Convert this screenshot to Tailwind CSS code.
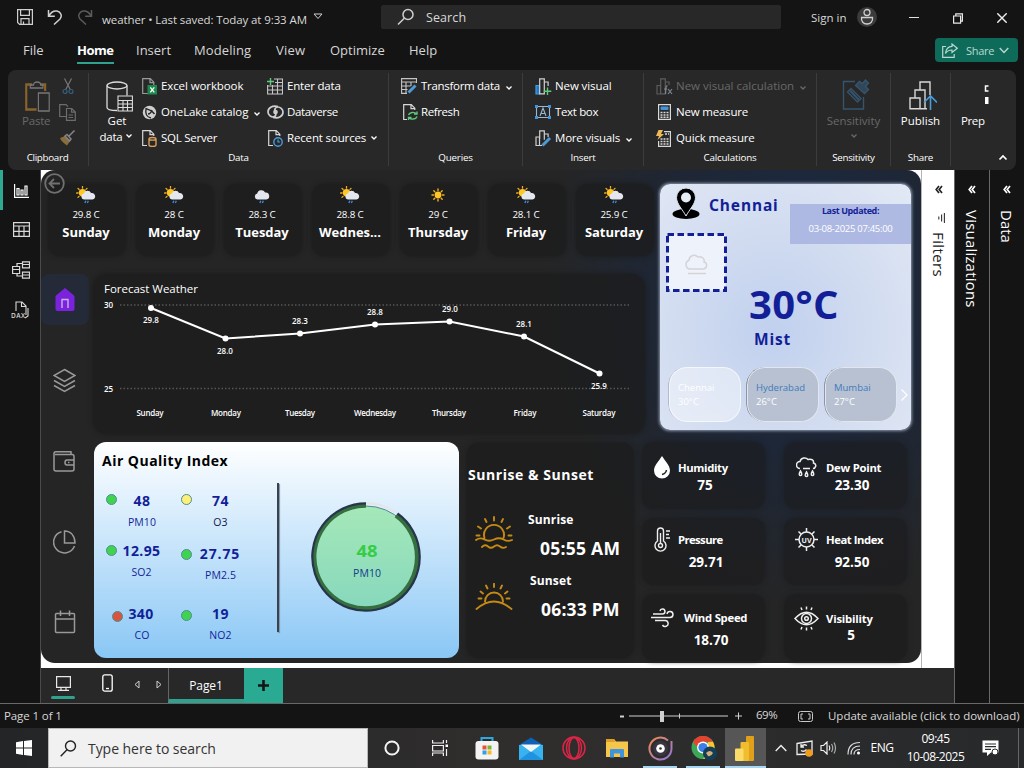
<!DOCTYPE html>
<html lang="en">
<head>
<meta charset="utf-8">
<title>weather - Power BI Desktop</title>
<script src="https://cdn.jsdelivr.net/npm/@tailwindcss/browser@4"></script>
</head>
<body class="w-[1024px] h-[768px] overflow-hidden bg-[#141414] text-white font-['Open_Sans','Noto_Sans',sans-serif] text-[12px] leading-none whitespace-nowrap flex flex-col">

<svg class="hidden">
  <symbol id="sun-cloud" viewBox="0 0 20 18">
    <g stroke="#f2b01e" stroke-width="1.3" stroke-linecap="round"><path d="M6.500 .6v1.600M2 2.400l1.100 1.100M.6 7h1.500M2 11.400l1-1M11 2.400l-1 1"/></g>
    <circle cx="6.500" cy="6.800" r="3.700" fill="#ffc526"/>
    <path d="M8 13.500a3 3 0 0 1-.3-5.900 4 4 0 0 1 7.400-.6 3.300 3.300 0 0 1 1.400 6.500z" fill="#e4e8ee"/>
    <path d="M9.800 14.700l-.9 2.200M12.300 14.700l-.9 2.200" stroke="#3f8ce0" stroke-width="1.300"/>
  </symbol>
  <symbol id="cloud-rain" viewBox="0 0 20 18">
    <path d="M5.500 13.500a3 3 0 0 1-.3-5.900 4.200 4.200 0 0 1 7.900-1 3.500 3.500 0 0 1 1.200 6.900z" fill="#e4e8ee"/>
    <path d="M8.800 14.700l-.9 2.200M11.300 14.700l-.9 2.200" stroke="#3f8ce0" stroke-width="1.300"/>
  </symbol>
  <symbol id="sunny" viewBox="0 0 20 18">
    <circle cx="10" cy="9" r="3.400" fill="#ffc526"/>
    <path d="M10 3v1.500M10 13.500V15M4 9h1.500M14.500 9H16M5.800 4.800l1 1M13.200 12.200l1 1M5.800 13.200l1-1M13.200 5.800l1-1" stroke="#f2b01e" stroke-width="1.400" stroke-linecap="round"/>
  </symbol>
  <symbol id="chev" viewBox="0 0 8 6"><path d="M1.500 1.500L4 4l2.500-2.500" fill="none" stroke="currentColor" stroke-width="1.300"/></symbol>
  <symbol id="collapse" viewBox="0 0 8 9"><path d="M4 1L1.200 4.500 4 8M7 1L4.200 4.500 7 8" fill="none" stroke="currentColor" stroke-width="1.700"/></symbol>
</svg>

<!-- Title bar -->
<header class="h-[34px] shrink-0 flex items-center text-[#d8d8d8]">
  <svg class="ml-[17px] w-4 h-4" viewBox="0 0 16 16" fill="none" stroke="#d0d0d0" stroke-width="1.200"><path d="M.6.6h14.800v14.800H2.600l-2-2zM3.600.6v5.800h8.800V.6M4 15.400V9.600h8v5.800M6.500 15v-2.500"/></svg>
  <svg class="ml-[14px] w-4 h-4" viewBox="0 0 16 16" fill="none" stroke="#d0d0d0" stroke-width="1.500"><path d="M1.500 1v6.300h6.300M1.800 7C4 3 7 1.500 10 2c4 .8 5.500 5 3 8l-6 5.500"/></svg>
  <svg class="ml-[14px] w-4 h-4" viewBox="0 0 16 16" fill="none" stroke="#5a5a5a" stroke-width="1.500"><path d="M14.500 1v6.300H8.200M14.200 7C12 3 9 1.500 6 2c-4 .8-5.500 5-3 8l6 5.500"/></svg>
  <span class="ml-[9px] mt-[5px] w-[206px] text-[11.500px] tracking-[-0.1px]">weather • Last saved: Today at 9:33 AM</span>
  <svg class="ml-[5px] w-[10px] h-[8px]" viewBox="0 0 10 8" fill="none" stroke="#cfcfcf"><path d="M1 1h8L5 5.500z"/></svg>
  <div class="ml-[58px] w-[400px] h-6 bg-[#282828] rounded-xs flex items-center">
    <svg class="ml-4 w-[18px] h-[18px]" viewBox="0 0 18 18" fill="none" stroke="#d0d0d0" stroke-width="1.500"><circle cx="11" cy="6.500" r="5"/><path d="M7.300 10.200L1 16.500"/></svg>
    <span class="ml-[11px] mt-[2px] text-[12.500px] tracking-[0.1px]">Search</span>
  </div>
  <span class="ml-[30px] w-[36px] mt-[2px] text-[11.500px]">Sign in</span>
  <svg class="ml-[10px] w-5 h-5" viewBox="0 0 20 20" fill="none" stroke="#d0d0d0" stroke-width="1.300"><circle cx="10" cy="10" r="10" fill="#3b3b3b" stroke="none"/><circle cx="10" cy="5.500" r="3"/><path d="M4.500 10.500h11c.6 4-2 6.500-5.500 6.500s-6-2.500-5.500-6.500z"/></svg>
  <svg class="ml-[32px] w-[10px] h-[10px]" viewBox="0 0 10 10" stroke="#e0e0e0"><path d="M0 5.500h10"/></svg>
  <svg class="ml-[34px] mt-[2px] w-[10px] h-[11px]" viewBox="0 0 10 11" fill="none" stroke="#e8e8e8" stroke-width="1.200"><path d="M.6 3h7v7.200h-7zM2.800 2.800V.8h6.600v7.400H7.800"/></svg>
  <svg class="ml-[34px] mt-[2px] w-[10px] h-[10px]" viewBox="0 0 10 10" stroke="#f0f0f0" stroke-width="1.400"><path d="M.3.3l9.400 9.400M9.700.3L.3 9.700"/></svg>
</header>

<!-- Menu tabs -->
<nav class="h-9 shrink-0 flex items-start text-[13px] text-[#d6d6d6]">
  <span class="ml-[23px] mt-[10px] w-[54px]">File</span>
  <span class="w-[37px] h-[30px] pt-[10px] border-b-2 border-[#2fa28f] font-bold text-white tracking-[-0.5px]">Home</span>
  <span class="ml-[22px] mt-[10px] w-[58px]">Insert</span>
  <span class="mt-[10px] w-[82px] tracking-[0.1px]">Modeling</span>
  <span class="mt-[10px] w-[54px] tracking-[0.2px]">View</span>
  <span class="mt-[10px] w-[79px]">Optimize</span>
  <span class="mt-[10px] w-[30px]">Help</span>
  <button class="ml-auto mr-[6px] mt-[4px] w-[83px] h-6 rounded bg-[#0e6b5a] flex items-center text-[11px] text-[#b9d8d1]">
    <svg class="ml-[7px] w-4 h-[15px]" viewBox="0 0 16 15" fill="none" stroke="#b9d8d1" stroke-width="1.200"><path d="M4 3.500H.7v10.800h11.500V11M10 1l5.300 4.200L10 9.500V7C7 7 5 8 3.500 10.500 4 6 6 3.600 10 3.400z"/></svg>
    <span class="ml-[8px] w-[28px] tracking-[-0.3px]">Share</span>
    <svg class="ml-[5px] w-[10px] h-[7px]" viewBox="0 0 10 7" fill="none" stroke="#b9d8d1" stroke-width="1.400"><path d="M.7 1L5 5.500 9.300 1"/></svg>
  </button>
</nav>

<!-- Ribbon -->
<section class="h-[100px] shrink-0 mx-2 rounded-lg bg-[#282828] flex pt-[3px] pb-1 text-[11.500px] [&>div]:shrink-0 [&>div]:flex [&>div]:flex-col [&>div]:justify-between [&>div]:border-r [&>div]:border-[#3c3c3c]">
  <div class="w-[81px]">
    <div class="flex">
      <div class="ml-[14px] w-[32px] pt-[8px] flex flex-col text-[#686868]">
        <svg class="ml-[2px] w-[27px] h-[31px]" viewBox="0 0 30 31" preserveAspectRatio="none" fill="none" stroke-width="1.300"><path d="M9 3.500H2.500v25H14M19 3.500h4.500V10" stroke="#8a632b" stroke-width="2.400"/><path d="M7 7V4h3.500c0-4 8-4 8 0H21v3z" stroke="#777"/><path d="M16 12h12v18H16z" stroke="#777"/></svg>
        <span class="mt-[3px] tracking-[-0.2px]">Paste</span>
      </div>
      <div class="ml-[5px] pt-[5px] flex flex-col items-center gap-[9px]">
        <svg class="w-[12px] h-[17px]" viewBox="0 0 12 17" fill="none" stroke-width="1.200"><path d="M2.500.5L8.500 12M9.500.5L3.500 12" stroke="#777"/><circle cx="3" cy="13.500" r="2" stroke="#31607f"/><circle cx="9" cy="13.500" r="2" stroke="#31607f"/></svg>
        <svg class="w-[17px] h-[17px]" viewBox="0 0 17 17" fill="none" stroke="#6c6c6c" stroke-width="1.200"><path d="M7 12.500H.7V.7H7l2 2M7.500 4.500h5.300l3.500 3.500v8.300H7.500zM12.500 4.500v3.700h3.800M9.500 11h4.500M9.500 13.500h4.500"/></svg>
        <svg class="w-[17px] h-[16px]" viewBox="0 0 17 16"><path d="M1 8l5-2 5 5-3 4.500C5.500 14 2 11 1 8z" fill="#8a6d3c"/><path d="M6 6l2-1.500 4 4.500-1.500 2zM10 6l5.500-5.500" fill="none" stroke="#858585" stroke-width="1.500"/></svg>
      </div>
    </div>
    <p class="w-[79px] pb-[3px] text-center text-[9.800px] font-medium tracking-[-0.3px]">Clipboard</p>
  </div>

  <div class="w-[300px]">
    <div class="flex h-[78px]">
      <div class="ml-[8px] w-[40px] pt-[8px] flex flex-col items-center">
        <svg class="ml-[4px] w-[27px] h-[31px]" viewBox="0 0 27 31" fill="none" stroke="#dcdcdc" stroke-width="1.300"><ellipse cx="11" cy="4.500" rx="10" ry="3.500"/><path d="M1 4.500v22c0 2 5 3 10 3M21 4.500v10"/><path d="M12 15h14.400v15H12zM12 19.500h14.400M12 23h14.400M12 26.500h14.400M17 19v11M21.500 19v11" stroke-width="1.100"/></svg>
        <span class="mt-[3px]">Get</span>
        <span class="-ml-[2px] mt-[4px] flex items-center tracking-[-0.2px]">data<svg class="ml-[2px] w-2 h-[6px]"><use href="#chev"/></svg></span>
      </div>
      <div class="ml-[5px] w-[126px]">
        <div class="h-[26px] flex items-center"><svg class="w-[15px] h-[17px]" viewBox="0 0 15 17"><path d="M6 15.500H.7V.7h7.600l3.500 3.500V7M8 .7v4h4" fill="none" stroke="#9a9a9a" stroke-width="1.200"/><path d="M5.500 7H15v9.500H5.500z" fill="#1b8a4e"/><path d="M8.300 9.300l4 5M12.300 9.300l-4 5" stroke="#fff" stroke-width="1.300"/></svg><span class="ml-[4px] tracking-[-0.1px]">Excel workbook</span></div>
        <div class="h-[26px] flex items-center"><svg class="w-[15px] h-[15px]" viewBox="0 0 15 15"><circle cx="7.500" cy="7.500" r="6.700" fill="#cfcfcf"/><path d="M3.500 3.500c2 1 6 1 9 5.500M4 4c-1 5 1 8 5 9M6 9c1.500 0 3-1 4-4" fill="none" stroke="#282828" stroke-width="1.400"/></svg><span class="ml-[4px] tracking-[-0.1px]">OneLake catalog</span><svg class="ml-[5px] mt-[4px] w-2 h-[6px]"><use href="#chev"/></svg></div>
        <div class="h-[26px] flex items-center"><svg class="w-[15px] h-[17px]" viewBox="0 0 15 17" fill="none"><path d="M5 15.500H.7V.7h7.600l3.500 3.500V6M8 .7v4h4" stroke="#d8d8d8" stroke-width="1.200"/><path d="M7 9c0-2 7-2 7 0v6c0 2-7 2-7 0zM7 9c0 1.500 7 1.500 7 0" stroke="#d9a05b" stroke-width="1.400"/></svg><span class="ml-[4px] tracking-[-0.25px]">SQL Server</span></div>
      </div>
      <div class="-ml-[1px] w-[116px]">
        <div class="h-[26px] flex items-center"><svg class="w-[16px] h-[17px]" viewBox="0 0 16 17" fill="none" stroke="#c6c6c6" stroke-width="1.100"><path d="M7 1h8.500v15H.6V7M.6 8h15M.6 12h15M5.500 7v9M10.500 1v15M8 4.500h7.500"/><path d="M3.500 0v7M0 3.500h7" stroke="#5fc97c" stroke-width="1.400"/></svg><span class="ml-[4px] tracking-[-0.2px]">Enter data</span></div>
        <div class="h-[26px] flex items-center"><svg class="w-[17px] h-[14px]" viewBox="0 0 17 14" fill="none" stroke="#cfcfcf" stroke-width="1.700"><path d="M11 1.500C5 0 1 3 1 7c0 3 3 5 5 5 4 0 3-5 1.500-6M6 12.500c6 1.500 10-1.500 10-5.500 0-3-3-5-5-5-4 0-4 5-1.500 6"/><circle cx="8.500" cy="7" r="1.500"/></svg><span class="ml-[3px] tracking-[-0.35px]">Dataverse</span></div>
        <div class="h-[26px] flex items-center"><svg class="ml-[1px] w-[15px] h-[17px]" viewBox="0 0 15 17" fill="none"><path d="M5 15.500H.7V.7h7.600l3.500 3.500V6M8 .7v4h4" stroke="#d8d8d8" stroke-width="1.200"/><circle cx="10" cy="12" r="4.200" stroke="#4a9bd8" stroke-width="1.400"/><path d="M10 9.500V12h2" stroke="#4a9bd8" stroke-width="1.200"/></svg><span class="ml-[4px] tracking-[-0.15px]">Recent sources</span><svg class="ml-[4px] w-2 h-[6px]"><use href="#chev"/></svg></div>
      </div>
    </div>
    <p class="pb-[3px] text-center text-[9.800px] font-medium tracking-[-0.2px]">Data</p>
  </div>

  <div class="w-[134px]">
    <div class="ml-[12px]">
      <div class="h-[26px] flex items-center"><svg class="w-[16px] h-[16px]" viewBox="0 0 16 16" fill="none" stroke="#c6c6c6" stroke-width="1.100"><path d="M15.500 5V.6H.6v14.800H6M.6 4h15M.6 8h9M.6 11.500h6M5 4v11M10 4v4"/><path d="M7.500 14.500l7-7" stroke="#4a9bd8" stroke-width="3"/></svg><span class="ml-[4px] tracking-[-0.3px]">Transform data</span><svg class="ml-[5px] mt-[4px] w-2 h-[6px]"><use href="#chev"/></svg></div>
      <div class="h-[26px] flex items-center"><svg class="ml-[2px] w-[15px] h-[17px]" viewBox="0 0 15 17" fill="none"><path d="M4 15.500H.7V.7h7.600l3.500 3.500V6M8 .7v4h4" stroke="#d8d8d8" stroke-width="1.200"/><path d="M5.500 11c1-3 6-3.500 8-1M14 7.500V10h-3M14 12.500c-1 3-6 3.500-8 1M5.500 16v-2.500h3" stroke="#5fc97c" stroke-width="1.400"/></svg><span class="ml-[3px] tracking-[-0.4px]">Refresh</span></div>
    </div>
    <p class="pb-[3px] text-center text-[9.800px] font-medium tracking-[-0.2px]">Queries</p>
  </div>

  <div class="w-[121px]">
    <div class="ml-[12px]">
      <div class="h-[26px] flex items-center"><svg class="w-[17px] h-[17px]" viewBox="0 0 17 17" fill="none" stroke="#d0d0d0" stroke-width="1.200"><path d="M1 7.500h3.500V16H1z" fill="#1b79c8" stroke="#4a9bd8"/><path d="M4.700.8h4.600v15H4.700zM9.500 4h3.600v4" /><path d="M12.500 9.500V17M8.800 13.200h7.500" stroke="#5fc97c" stroke-width="1.400"/></svg><span class="ml-[3px] tracking-[-0.1px]">New visual</span></div>
      <div class="h-[26px] flex items-center"><svg class="w-[16px] h-[14px]" viewBox="0 0 16 14"><path d="M1.500 1.500h13v11h-13zM5 11l3-8 3 8M6 8.500h4" fill="none" stroke="#9ab8cf" stroke-width="1.100"/><g fill="#3f96dc"><path d="M0 0h3v3H0zM13 0h3v3h-3zM0 11h3v3H0zM13 11h3v3h-3z"/></g></svg><span class="ml-[4px] tracking-[-0.35px]">Text box</span></div>
      <div class="h-[26px] flex items-center"><svg class="w-[17px] h-[17px]" viewBox="0 0 17 17" fill="none" stroke="#d0d0d0" stroke-width="1.200"><path d="M7 15.500H1V7h3.500v8M4.700 9V.8h4.600v9M9.500 4h3.600v3"/><path d="M7.500 15.500l7.500-7.500" stroke="#4a9bd8" stroke-width="3"/></svg><span class="ml-[3px] tracking-[-0.2px]">More visuals</span><svg class="ml-[5px] mt-[4px] w-2 h-[6px]"><use href="#chev"/></svg></div>
    </div>
    <p class="pb-[3px] text-center text-[9.800px] font-medium tracking-[-0.2px]">Insert</p>
  </div>

  <div class="w-[173px]">
    <div class="ml-[12px]">
      <div class="h-[26px] flex items-center text-[#686868]"><svg class="w-[17px] h-[17px]" viewBox="0 0 17 17" fill="none" stroke="#5c5c5c" stroke-width="1.200"><path d="M1 7.500h3.500V16H1zM4.700.8h4.600v15H4.700zM9.500 4h3.600v3"/><path d="M11.500 8c-2-1-1.500 3-2 8M8 11h3" stroke="#7e8890"/><path d="M12 11l4 5M16 11l-4 5" stroke="#7e8890"/></svg><span class="ml-[3px] tracking-[0px]">New visual calculation</span><svg class="ml-[5px] mt-[4px] w-2 h-[6px]"><use href="#chev"/></svg></div>
      <div class="h-[26px] flex items-center"><svg class="ml-[2px] w-[13px] h-[16px]" viewBox="0 0 13 16" fill="none" stroke="#d8d8d8"><path d="M.6.6h11.800v14.800H.6z" stroke-width="1.200"/><path d="M3 3h7v2.500H3z" fill="#3f96dc" stroke="#3f96dc"/><path d="M2.500 8.500h8M2.500 11h8M2.500 13.300h8" stroke-width="1.500" stroke-dasharray="2 1"/></svg><span class="ml-[5px] tracking-[-0.2px]">New measure</span></div>
      <div class="h-[26px] flex items-center"><svg class="w-[15px] h-[17px]" viewBox="0 0 15 17" fill="none" stroke="#d8d8d8"><path d="M8 1.600h6.400v14.800H2.600V11" stroke-width="1.200"/><path d="M4.500 9h8M4.500 11.500h8M4.500 14h8M9 4h4" stroke-width="1.500" stroke-dasharray="2 1"/><path d="M2.500 0H7L5 4h3L1.500 10 3 6H0z" fill="#edb95a" stroke="none"/></svg><span class="ml-[5px] tracking-[-0.15px]">Quick measure</span></div>
    </div>
    <p class="pb-[3px] text-center text-[9.800px] font-medium tracking-[-0.2px]">Calculations</p>
  </div>

  <div class="w-[74px]">
    <div class="flex flex-col items-center text-[#686868] pt-[5px]">
      <svg class="ml-[4px] w-[28px] h-[32px]" viewBox="0 0 28 32" fill="none" stroke="#35546d" stroke-width="1.400"><path d="M13 3.500H1.500V31h20V19"/><path d="M5.500 14l3.500-3.500 10 10L15.500 24z"/><path d="M8 12.500l9 9.500" stroke-width="2"/><path d="M13.500 7.500l4-4 3 2 3-3.500 3 3-3 3.500 3 3-4 4z" fill="#35546d" fill-opacity=".7"/></svg>
      <span class="mt-[5px]">Sensitivity</span>
      <svg class="mt-[6px] w-2 h-[6px]"><use href="#chev"/></svg>
    </div>
    <p class="pb-[3px] text-center text-[9.800px] font-medium tracking-[-0.3px]">Sensitivity</p>
  </div>

  <div class="w-[60px]">
    <div class="flex flex-col items-center pt-[8px]">
      <svg class="ml-[5px] w-[28px] h-[29px]" viewBox="0 0 28 29" fill="none" stroke="#d8d8d8" stroke-width="1.400"><path d="M1 17h10v10.800H1zM6 17V9h10v18.800h-5M11 9V1h10v13M16 27.800h2"/><path d="M21.500 29V15.500M15 21.500l6.500-6.500 6.500 6.500" stroke="#4a9bd8" stroke-width="1.600"/></svg>
      <span class="mt-[5px]">Publish</span>
    </div>
    <p class="pb-[3px] text-center text-[9.800px] font-medium tracking-[-0.2px]">Share</p>
  </div>

  <div class="grow border-r-0!">
    <div class="flex flex-col pl-[10px] pt-[12px]">
      <svg class="ml-[23px] w-[5px] h-[20px]" viewBox="0 0 5 20"><path d="M4.500 1H1.500v5h3" fill="none" stroke="#fff" stroke-width="1.500"/><path d="M1 12h3.500v7H1z" fill="#fff"/></svg>
      <span class="mt-[10px] tracking-[-0.4px]">Prep</span>
    </div>
    <svg class="self-end mr-[8px] mb-[5px] w-[10px] h-[7px]" viewBox="0 0 10 7" fill="none" stroke="#fff" stroke-width="1.700"><path d="M1.500 5.500L5 2l3.500 3.500"/></svg>
  </div>
</section>

<!-- Workspace -->
<main class="h-[533px] shrink-0 flex">
  <aside class="w-[41px] shrink-0 border-r border-[#4a4a4a] flex">
    <div class="w-[3px] h-10 bg-[#2fa98f]"></div>
    <div class="w-[36px] flex flex-col items-center pt-[14px]">
      <svg class="w-[15px] h-[14px]" viewBox="0 0 15 14" fill="none" stroke="#fff" stroke-width="1.200"><path d="M.6 0v13.400H15M3 4.500h2v6.500H3zM7 6h2v5H7zM11 2h2v9h-2z"/></svg>
      <svg class="mt-[24px] w-[17px] h-[15px]" viewBox="0 0 17 15" fill="none" stroke="#d8d8d8" stroke-width="1.200"><path d="M.6.6h15.800v13.800H.6zM.6 4h16M.6 9.300h16M6 4v10M11 4v10"/></svg>
      <svg class="mt-[24px] w-[18px] h-[18px]" viewBox="0 0 18 18" fill="none" stroke="#d8d8d8" stroke-width="1.200"><path d="M10.500.8h7v6h-7zM10.500 11.200h7v6h-7zM.6 5.500h7v7h-7zM.6 8.500h7M10.500 3.500h7M10.500 14h7M5 5.500V2.500h5.500M5 12.500v2.500h5.500"/></svg>
      <svg class="-ml-[2px] mt-[22px] w-[18px] h-[18px]" viewBox="0 0 18 18" fill="none" stroke="#d8d8d8" stroke-width="1.100"><path d="M5 10V1h6l4 4v9M10.500 1v4.500H15M17 7v8l-3 2"/><text x="0" y="17" font-size="6.500" fill="#d8d8d8" stroke="none" font-weight="600" textLength="14">DAX</text></svg>
    </div>
  </aside>

  <section class="w-[913px] shrink-0 flex flex-col">
    <div class="h-[498px] flex">
      <!-- Report canvas -->
      <div class="w-[880px] shrink-0 bg-white">
        <div class="relative h-[493px] rounded-[14px] flex flex-col bg-[#252525] bg-[radial-gradient(ellipse_260px_320px_at_760px_120px,#1b2a47_0%,#1e2737_50%,#252525_100%)]">
          <svg class="absolute left-[3px] top-[3px] w-[21px] h-[21px]" viewBox="0 0 21 21" fill="none" stroke="#707070" stroke-width="1.800"><circle cx="10.500" cy="10.500" r="9.300"/><path d="M16 10.500H5.500M10 6l-4.500 4.500L10 15"/></svg>
          <div class="h-[264px] flex">
            <div class="w-[619px] shrink-0">
              <!-- Daily forecast -->
              <div class="pt-[14px] pl-[7px] flex gap-[10px] [&>div]:w-[78px] [&>div]:h-[72px] [&>div]:rounded-[12px] [&>div]:bg-[#1b1b1b]/70 [&>div]:flex [&>div]:flex-col [&>div]:items-center [&>div]:pr-[2px] [&>div]:shadow-[0_0_5px_#1b1b1b] [&_svg]:w-5 [&_svg]:h-[18px] [&_svg]:mt-[2px] [&_p]:mt-[6px] [&_p]:h-[10px] [&_p]:text-[9.800px] [&_p]:tracking-[-0.15px] [&_b]:mt-[6px] [&_b]:text-[13px] [&_b]:tracking-[-0.05px]">
                <div><svg><use href="#sun-cloud"/></svg><p>29.8 C</p><b>Sunday</b></div>
                <div><svg><use href="#sun-cloud"/></svg><p>28 C</p><b>Monday</b></div>
                <div><svg><use href="#cloud-rain"/></svg><p>28.3 C</p><b>Tuesday</b></div>
                <div><svg><use href="#sun-cloud"/></svg><p>28.8 C</p><b>Wednes...</b></div>
                <div><svg><use href="#sunny"/></svg><p>29 C</p><b>Thursday</b></div>
                <div><svg><use href="#sun-cloud"/></svg><p>28.1 C</p><b>Friday</b></div>
                <div><svg><use href="#sun-cloud"/></svg><p>25.9 C</p><b>Saturday</b></div>
              </div>
              <div class="mt-[18px] flex">
                <div class="w-[52px] flex flex-col">
                  <div class="w-[48px] h-[51px] rounded-lg bg-[#252a38] flex items-center justify-center">
                    <svg class="w-5 h-[23px]" viewBox="0 0 20 23"><path d="M10 0l9 7.500q.5.500.5 1.500v12q0 2-2 2h-15q-2 0-2-2V9q0-1 .5-1.500z" fill="#7a22dc"/><path d="M7 20v-8.500h6V20" fill="none" stroke="#c9b0ee" stroke-width="1.400"/></svg>
                  </div>
                  <svg class="ml-[12px] mt-[43px] w-[23px] h-[25px]" viewBox="0 0 23 25" fill="none" stroke="#999" stroke-width="1.500"><path d="M11.500 1.500L22 7.500l-10.500 6L1 7.500zM1 12.500l10.500 6 10.500-6M1 17.500l10.500 6 10.500-6"/></svg>
                </div>
                <!-- Forecast line chart -->
                <div class="w-[552px] h-[160px] rounded-[14px] bg-[#1b1b1b]/70 shadow-[0_0_5px_#1b1b1b]">
                  <svg class="block w-[552px] h-[160px]" viewBox="0 0 552 160" fill="#fff" font-size="8" font-weight="600">
                    <text x="11" y="19" font-size="11.500" font-weight="400" textLength="94">Forecast Weather</text>
                    <path d="M27 31H536M27 114.500H536" stroke="#555" stroke-width="1.500" stroke-dasharray="1.500 2"/>
                    <text x="11" y="34" textLength="9">30</text><text x="11" y="118" textLength="9">25</text>
                    <path d="M58 34L132.500 64.500 207 59.500 282 50.500 356.500 47.500 431 62.500 506.500 99.500" fill="none" stroke="#fff" stroke-width="2"/>
                    <g><circle cx="58" cy="34" r="3"/><circle cx="132.500" cy="64.500" r="3"/><circle cx="207" cy="59.500" r="3"/><circle cx="282" cy="50.500" r="3"/><circle cx="356.500" cy="47.500" r="3"/><circle cx="431" cy="62.500" r="3"/><circle cx="506.500" cy="99.500" r="3"/></g>
                    <g text-anchor="middle">
                      <text x="58" y="49">29.8</text><text x="132" y="80">28.0</text><text x="207" y="50">28.3</text><text x="282" y="41">28.8</text><text x="357" y="38">29.0</text><text x="431" y="53">28.1</text><text x="506" y="115">25.9</text>
                      <text x="57" y="142" textLength="27">Sunday</text><text x="133" y="142" textLength="30">Monday</text><text x="207" y="142" textLength="30">Tuesday</text><text x="282" y="142" textLength="42">Wednesday</text><text x="356" y="142" textLength="34">Thursday</text><text x="432" y="142" textLength="23">Friday</text><text x="506" y="142" textLength="33">Saturday</text>
                    </g>
                  </svg>
                </div>
              </div>
            </div>

            <!-- Current weather -->
            <div class="mt-[14px] w-[251px] h-[246px] rounded-[10px] bg-[radial-gradient(ellipse_at_45%_60%,#c0d0ee_0%,#d0dbf0_45%,#e3e9f5_100%)] shadow-[0_0_3px_1px_#8f9bb0] text-[#131f97] flex flex-col">
              <div class="flex h-[60px]">
                <svg class="ml-[12px] mt-[4px] w-7 h-[31px]" viewBox="0 0 28 31"><ellipse cx="14" cy="26" rx="13.500" ry="5" fill="#000"/><path d="M14 0a9.500 9.500 0 0 1 9.500 9.500C23.500 16 17 22 14 28 11 22 4.500 16 4.500 9.500A9.500 9.500 0 0 1 14 0z" stroke="#dde5f4" stroke-width="1"/><circle cx="14" cy="9.500" r="5" fill="#e6ecf7"/></svg>
                <b class="ml-[9px] mt-[13px] w-[81px] font-['Noto_Sans'] text-[15.500px] leading-[17px] tracking-[0.9px]">Chennai</b>
                <div class="mt-[20px] w-[121px] h-[40px] bg-[#aab5e1]/90 text-center">
                  <p class="pt-[2px] font-bold text-[9px] tracking-[-0.4px]">Last Updated:</p>
                  <p class="mt-[9px] text-[9.500px] text-white tracking-[-0.3px]">03-08-2025 07:45:00</p>
                </div>
              </div>
              <div class="flex h-[113px]">
                <svg class="-mt-[11px] ml-[6px] w-[62px] h-[59px]" viewBox="0 0 62 59" fill="none"><path d="M1.500 1.500h58v56h-58z" fill="#eef2fa" stroke="#131f97" stroke-width="3" stroke-dasharray="6.500 3.500"/><path d="M24 36a4.500 4.500 0 0 1-1-8.700c0-4 5-7 9-3.300 4-1 7 2 6 5 4 1 3 7-1 7zM22 40.500h18" stroke="#d4d4d8" stroke-width="1.500"/></svg>
                <div class="ml-[21px] pt-[38px]">
                  <p class="text-[40px] leading-[44px] font-bold tracking-[0.4px]">30°C</p>
                  <p class="ml-[5px] mt-[4px] text-[15.500px] leading-[18px] font-bold tracking-[0.8px]">Mist</p>
                </div>
              </div>
              <div class="mt-[10px] ml-[9px] flex items-center gap-[6px] text-[9.500px] [&>div]:w-[72px] [&>div]:h-[55px] [&>div]:rounded-[18px] [&>div]:border [&>div]:border-white/60 [&>div]:pl-[8px] [&>div]:pt-[15px] [&_p+p]:mt-[4px] [&_p+p]:text-white">
                <div class="bg-white/40 text-white shadow-[-1px_0_0_-0.5px_#8d95a3]"><p>Chennai</p><p>30°C</p></div>
                <div class="bg-[#b8c1d2] text-[#3c7bbb] shadow-[-1px_0_0_-0.5px_#4b5260]"><p>Hyderabad</p><p>26°C</p></div>
                <div class="bg-[#b8c1d2] text-[#3c7bbb] shadow-[-1px_0_0_-0.5px_#4b5260]"><p>Mumbai</p><p>27°C</p></div>
                <svg class="-ml-[2px] w-[7px] h-[12px]" viewBox="0 0 7 12" fill="none" stroke="#fff" stroke-width="1.200"><path d="M.5.5L6 6 .5 11.500"/></svg>
              </div>
            </div>
          </div>

          <div class="h-[229px] flex">
            <div class="w-[53px] pl-[12px] pt-[16px] flex flex-col">
              <svg class="w-6 h-6" viewBox="0 0 24 24" fill="none" stroke="#999" stroke-width="1.500"><path d="M18 4.500V1.800H3q-2 0-2 1.700M1 3v16q0 2 2 2h16q2 0 2-2V6.500q0-2-2-2H2M21 10h-7q-2 0-2 2.500t2 2.500h7M15 12.500h1.500"/></svg>
              <svg class="mt-[56px] w-6 h-6" viewBox="0 0 24 24" fill="none" stroke="#999" stroke-width="1.500"><path d="M8.500 1.700A10.800 10.800 0 1 0 21.500 16M11.500 1v12H22c0-7-4-12-10.500-12z"/></svg>
              <svg class="mt-[56px] w-6 h-6" viewBox="0 0 24 24" fill="none" stroke="#999" stroke-width="1.500"><path d="M3.500 3.500h17q1 0 1 1v17q0 1-1 1h-17q-1 0-1-1v-17q0-1 1-1zM2.500 9h19M7.500.5V6M16.500.5V6"/></svg>
            </div>

            <!-- Air quality -->
            <div class="mt-[8px] w-[365px] h-[216px] rounded-[12px] bg-linear-to-b from-white to-[#89c7f5] text-[#131f97] flex">
              <div class="w-[183px]">
                <b class="block ml-[8px] mt-[12px] text-[14px] tracking-[0.48px] text-black">Air Quality Index</b>
                <div class="mt-[23px] ml-[12px] flex [&_i]:w-[11px] [&_i]:h-[11px] [&_i]:shrink-0 [&_i]:rounded-full [&_i]:border [&_i]:border-[#4d8f8f] [&_b]:text-[14px] [&_b]:h-[14px] [&_b]:tracking-[0.4px] [&_p]:mt-[9px] [&_p]:text-[10.500px] [&_p]:h-[10px] [&_p]:tracking-[0.1px] [&>div>div]:flex">
                  <div class="w-[74px]">
                    <div><i class="mt-[3px] bg-[#3fd350]"></i><div class="ml-[5px] w-[40px] mt-[3px] text-center"><b>48</b><p>PM10</p></div></div>
                    <div class="mt-[17px]"><i class="mt-[1px] bg-[#3fd350]"></i><div class="ml-[4px] w-[41px] text-center"><b>12.95</b><p>SO2</p></div></div>
                    <div class="mt-[30px]"><i class="ml-[6px] mt-[4px] bg-[#d8543f]"></i><div class="ml-0 w-[38px] text-center"><b class="-ml-[2px]">340</b><p>CO</p></div></div>
                  </div>
                  <div class="w-[80px]">
                    <div><i class="ml-[1px] mt-[3px] bg-[#fdf07a]"></i><div class="ml-[8px] w-[41px] mt-[3px] text-center"><b>74</b><p class="text-[#10204a]">O3</p></div></div>
                    <div class="mt-[20px]"><i class="ml-[1px] mt-[2px] bg-[#3fd350]"></i><div class="ml-[8px] w-[41px] text-center"><b class="-ml-[1px]"><span class="tracking-[0.9px]">27.75</span></b><p>PM2.5</p></div></div>
                    <div class="mt-[27px]"><i class="ml-[1px] mt-[3px] bg-[#3fd350]"></i><div class="ml-[8px] w-[41px] text-center"><b>19</b><p>NO2</p></div></div>
                  </div>
                </div>
              </div>
              <div class="mt-[41px] w-[2px] h-[149px] bg-[#3a4250] shadow-[1px_1px_1px_#7d94a8]"></div>
              <svg class="ml-[31px] mt-[59px] w-[112px] h-[112px]" viewBox="0 0 112 112">
                <defs><linearGradient id="gauge" x1="0" y1="0" x2="0" y2="1"><stop offset="0" stop-color="#a5e8b8"/><stop offset="1" stop-color="#87d8bd"/></linearGradient></defs>
                <circle cx="56" cy="56" r="51" fill="url(#gauge)" stroke="#3b6f8f" stroke-width=".8"/>
                <path d="M86 14.400A51.500 51.500 0 1 1 56 4.500" fill="none" stroke="#356f40" stroke-width="4.500"/>
                <path d="M87.500 12.500A53.700 53.700 0 1 1 56 2.300" fill="none" stroke="#273449" stroke-width="2.200"/>
                <path d="M56 2.300A53.700 53.700 0 0 1 86 11.500" fill="none" stroke="#e6e6ea" stroke-width="2.500"/>
                <text x="57" y="56" text-anchor="middle" font-size="15.500" font-weight="700" fill="#35cd45" textLength="21" lengthAdjust="spacingAndGlyphs">48</text>
                <text x="57" y="76" text-anchor="middle" font-size="10.500" fill="#123a8c" textLength="28">PM10</text>
              </svg>
            </div>

            <!-- Sunrise and sunset -->
            <div class="ml-[8px] mt-[9px] w-[167px] h-[215px] rounded-[12px] bg-[#1b1b1b]/70 shadow-[0_0_5px_#1b1b1b]">
              <b class="block ml-[1px] pt-[25px] text-[14px] tracking-[0.55px]">Sunrise &amp; Sunset</b>
              <div class="mt-[32px] flex">
                <svg class="ml-[8px] mt-[2px] w-[38px] h-[33px]" viewBox="0 0 38 33" fill="none" stroke="#c68a12" stroke-width="1.900" stroke-linecap="round"><path d="M1 24q4-3 8.500-.5t9.500 0 9.500 0T37 24M7 31q3-3 6-.5t6 0 6 0 6 .5M9.500 22a10 10 0 1 1 19 0M19 1v3.500M10 3l1.500 3M28 3l-1.500 3M3 10.500l3 2M35 10.500l-3 2M1.500 19.500h3M33.500 19.500h3"/></svg>
                <div class="ml-[15px]"><b class="block text-[12px] tracking-[0.15px]">Sunrise</b><b class="block mt-[14px] ml-[12px] text-[17.500px] tracking-[0.25px]">05:55 AM</b></div>
              </div>
              <div class="mt-[17px] flex">
                <svg class="ml-[8px] mt-[8px] w-[38px] h-[27px]" viewBox="0 0 38 27" fill="none" stroke="#c68a12" stroke-width="1.900" stroke-linecap="round"><path d="M1.500 26Q19 11 36.500 26M10 18.500a9 9 0 1 1 18 0M19 .8V4M11 2.500l1.500 3M27 2.500l-1.500 3M5.500 8.500l2.500 2M32.500 8.500l-2.500 2M3.500 15.500h3M31.500 15.500h3"/></svg>
                <div class="ml-[17px]"><b class="block text-[12px] tracking-[0.15px]">Sunset</b><b class="block mt-[14px] ml-[11px] text-[17.500px] tracking-[0.2px]">06:33 PM</b></div>
              </div>
            </div>

            <!-- Metrics -->
            <div class="ml-[8px] mt-[8px] w-[267px] grid grid-cols-[123px_123px] gap-x-[19px] auto-rows-[67px] gap-y-[9px] content-start [&>div]:rounded-[12px] [&>div]:bg-[#1a1b1d]/60 [&>div]:shadow-[0_0_5px_#1c1e22] [&>div]:flex [&_b]:block [&_b]:h-[12px] [&_span]:block [&_b]:text-[11.300px] [&_span]:text-[13.500px] [&_span]:font-bold [&_span]:text-center">
              <div><svg class="ml-[11px] mt-[14px] w-[18px] h-[23px]" viewBox="0 0 18 23"><path d="M9 0c3 5 8 9.500 8 14.500a8 8 0 0 1-16 0C1 9.500 6 5 9 0z" fill="#fff"/><path d="M13.500 14q-.5 3.500-4.500 4.500" fill="none" stroke="#222" stroke-width="1.500"/></svg><div class="ml-[7px] w-[54px] pt-[20px]"><b class="tracking-[-0.35px]">Humidity</b><span class="mt-[5px]">75</span></div></div>
              <div><svg class="ml-[12px] mt-[15px] w-[21px] h-[21px]" viewBox="0 0 21 21" fill="none" stroke="#eee" stroke-width="1.500"><path d="M4 11.500a3.500 3.500 0 0 1 0-7c1-4 6-4.500 8-2 4-1 6 1 5.500 3.500 4 1.500 2 5.500-.5 5.500M7 11.500h7M4.500 14q-2.500 4 0 4.500 2.500-.5 0-4.500zM10.500 15q-2.500 4 0 4.500 2.500-.5 0-4.500zM16.500 14q-2.500 4 0 4.500 2.500-.5 0-4.500z"/></svg><div class="ml-[9px] w-[52px] pt-[20px]"><b class="tracking-[-0.25px]">Dew Point</b><span class="mt-[5px]">23.30</span></div></div>
              <div><svg class="ml-[12px] mt-[9px] w-[17px] h-[25px]" viewBox="0 0 17 25" fill="none" stroke="#eee" stroke-width="1.400"><path d="M3.500 14V4q0-3 3-3t3 3v10a5.500 5.500 0 1 1-6 0zM6.500 6v10M12 4h4M12 7.500h3M12 11h4"/><circle cx="6.500" cy="18.500" r="2"/></svg><div class="ml-[7px] w-[56px] pt-[16px]"><b class="tracking-[-0.6px]">Pressure</b><span class="mt-[10px]">29.71</span></div></div>
              <div><svg class="ml-[11px] mt-[10px] w-[23px] h-[23px]" viewBox="0 0 23 23" fill="none" stroke="#eee" stroke-width="1.500"><circle cx="11.500" cy="11.500" r="7.500"/><path d="M11.500 0v4M11.500 19v4M0 11.500h4M19 11.500h4M3.500 3.500l2.500 2.500M17 17l2.500 2.500M3.500 19.500L6 17M17 6l2.500-2.500"/><text x="6.500" y="14.500" font-size="7.500" fill="#eee" stroke="none" font-weight="700" textLength="10" lengthAdjust="spacingAndGlyphs">UV</text></svg><div class="ml-[8px] w-[56px] pt-[16px]"><b class="tracking-[-0.45px]">Heat Index</b><span class="mt-[10px] -ml-[4px]">92.50</span></div></div>
              <div><svg class="ml-[9px] mt-[14px] w-[24px] h-[20px]" viewBox="0 0 24 20" fill="none" stroke="#eee" stroke-width="1.500"><path d="M2 6h9.500a2.500 2.500 0 1 0-2.500-3M0 9.500h19a3 3 0 1 0-3-3.500M4 12.500h10a3 3 0 1 1-2.500 4.500"/></svg><div class="ml-[9px] w-[62px] pt-[18px]"><b class="tracking-[-0.25px]">Wind Speed</b><span class="mt-[10px] -ml-[8px]">18.70</span></div></div>
              <div><svg class="ml-[10px] mt-[12px] w-[25px] h-[25px]" viewBox="0 0 25 25" fill="none" stroke="#eee" stroke-width="1.500"><path d="M1 12.500Q12.500 0 24 12.500 12.500 25 1 12.500z"/><circle cx="12.500" cy="12.500" r="5"/><circle cx="12.500" cy="12.500" r="1.800"/><path d="M12.500.5v3M7 1.500L8 4M18 1.500L17 4M12.500 21.500v3M7 23.500L8 21M18 23.500L17 21"/></svg><div class="ml-[7px] w-[50px] pt-[19px]"><b class="tracking-[-0.2px]">Visibility</b><span class="mt-[4px]">5</span></div></div>
            </div>
          </div>
        </div>
      </div>
      <!-- Filters pane -->
      <div class="w-[33px] bg-white border-l border-[#b5b5b5] text-[#222] flex flex-col items-center">
        <svg class="ml-[1px] mt-[15px] w-[8px] h-[9px]"><use href="#collapse"/></svg>
        <svg class="mt-[19px] ml-[6px] w-[8px] h-[10px]" viewBox="0 0 8 10" stroke="#333" stroke-width="1.100"><path d="M7.400 0v10M4.600 1.500v7M1.800 3.500v3"/></svg>
        <span class="ml-[2px] mt-[9px] [writing-mode:vertical-rl] text-[15px] leading-[18px] font-medium tracking-[0.4px]">Filters</span>
      </div>
    </div>
    <!-- Page tabs -->
    <div class="h-[35px] bg-[#282828] flex">
      <div class="w-[44px] flex flex-col items-center pt-[8px]"><svg class="w-[15px] h-[15px]" viewBox="0 0 15 15" fill="none" stroke="#e8e8e8" stroke-width="1.200"><path d="M.6.6h13.800v10.800H.6zM2 14.400h11M5 11.500v3M10 11.500v3"/></svg><div class="mt-[5px] w-6 h-[3px] rounded bg-[#2fa28f]"></div></div>
      <svg class="ml-[17px] mt-[6px] w-[11px] h-[18px]" viewBox="0 0 11 18" fill="none" stroke="#fff" stroke-width="1.300"><rect x=".8" y=".8" width="9.400" height="16.400" rx="2"/><path d="M4 14.500h3"/></svg>
      <svg class="ml-[21px] mt-[12px] w-[6px] h-[9px]" viewBox="0 0 6 9" fill="none" stroke="#d0d0d0"><path d="M5 1v7L1 4.500z"/></svg>
      <svg class="ml-[16px] mt-[12px] w-[6px] h-[9px]" viewBox="0 0 6 9" fill="none" stroke="#d0d0d0"><path d="M1 1v7l4-3.500z"/></svg>
      <div class="ml-[6px] w-[76px] border-l border-[#666] border-b-4 border-b-[#2fa28f] pt-[12px] pr-[1px] text-center text-[12px] tracking-[-0.1px]">Page1</div>
      <div class="w-[39px] bg-[#2aaa93] flex items-center justify-center"><svg class="w-[11px] h-[11px]" viewBox="0 0 11 11" stroke="#141414" stroke-width="2.600"><path d="M5.500 0v11M0 5.500h11"/></svg></div>
    </div>
  </section>
  <aside class="w-[35px] border-l border-[#686868] flex flex-col items-center">
    <svg class="mt-[15px] w-[8px] h-[9px]"><use href="#collapse"/></svg>
    <span class="mt-[16px] [writing-mode:vertical-rl] text-[15px] leading-[18px] tracking-[0.2px]">Visualizations</span>
  </aside>
  <aside class="w-[35px] border-l border-[#686868] flex flex-col items-center">
    <svg class="mt-[15px] w-[8px] h-[9px]"><use href="#collapse"/></svg>
    <span class="mt-[16px] [writing-mode:vertical-rl] text-[15px] leading-[18px]">Data</span>
  </aside>
</main>

<!-- Status bar -->
<footer class="h-[25px] shrink-0 border-t border-[#686868] bg-[#141414] text-[#d8d8d8] text-[11.500px] flex items-center">
  <span class="ml-[4px] w-[615px] tracking-[-0.1px]">Page 1 of 1</span>
  <svg class="w-[125px] h-[12px]" viewBox="0 0 125 12" stroke="#d0d0d0"><path d="M1 6.500h4" stroke-width="2"/><path d="M10 6h99M60.500 3.500v5M116 6h7M119.500 2.500v7"/><path d="M43 1v11" stroke-width="4"/></svg>
  <span class="ml-[12px] w-[24px] -mt-[2px] tracking-[-0.5px]">69%</span>
  <svg class="ml-[18px] w-[15px] h-[11px]" viewBox="0 0 15 11" fill="none" stroke="#c8c8c8"><rect x=".5" y=".5" width="14" height="10" rx="2"/><path d="M5 3H3v5h2M10 3h2v5h-2"/></svg>
  <span class="ml-[15px] tracking-[-0.02px]">Update available (click to download)</span>
</footer>

<!-- Taskbar -->
<footer class="h-10 shrink-0 bg-linear-to-r from-[#232527] via-[#302e2d] to-[#27292b] flex items-center [&>div]:h-10 [&>div]:flex [&>div]:items-center [&>div]:justify-center">
  <div class="w-12"><svg class="w-4 h-4" viewBox="0 0 16 16" fill="#fff"><path d="M0 2.200L7 1v6.500H0zM8 .9L16 0v7.500H8zM0 8.500h7V15l-7-1.200zM8 8.500h8V16l-8-1.100z"/></svg></div>
  <div class="w-[320px] bg-[#f1f1f1] border border-[#b8b8b8] justify-start! text-[#333]"><svg class="ml-[11px] w-[17px] h-[17px]" viewBox="0 0 17 17" fill="none" stroke="#222" stroke-width="1.400"><circle cx="10.500" cy="6" r="5"/><path d="M7 9.700L.7 16.300"/></svg><span class="ml-[11px] mt-px text-[14px] tracking-[-0.05px]">Type here to search</span></div>
  <div class="w-12"><svg class="w-4 h-4" viewBox="0 0 16 16"><circle cx="8" cy="8" r="6.600" fill="none" stroke="#f4f4f4" stroke-width="2"/></svg></div>
  <div class="w-12"><svg class="w-4 h-4" viewBox="0 0 16 16" fill="none" stroke="#eee" stroke-width="1.200"><path d="M.6 0v3h10.800V0M.6 16v-3h10.800v3M.6 5.500h10.800v5.500H.6zM14.500 0v3M14.500 9v7"/><path d="M13.500 4.500h2.500v2.500h-2.500z" fill="#fff" stroke="none"/></svg></div>
  <div class="w-[46px]"><svg class="w-6 h-6" viewBox="0 0 24 24"><path d="M6.500 6V2h11v4" fill="none" stroke="#2fa8e0" stroke-width="2"/><rect x=".5" y="5" width="23" height="18.500" rx="3" fill="#f3f3f3"/><path d="M7.500 9.500h4v4h-4z" fill="#e8533a"/><path d="M12.500 9.500h4v4h-4z" fill="#7cb82f"/><path d="M7.500 14.500h4v4h-4z" fill="#2f9fe8"/><path d="M12.500 14.500h4v4h-4z" fill="#f7b92c"/></svg></div>
  <div class="w-[43px]"><svg class="-ml-[2px] w-6 h-[23px]" viewBox="0 0 24 23"><path d="M0 8l12-7.500L24 8z" fill="#0d62b5"/><path d="M0 8h24v15H0z" fill="#37b4f0"/><path d="M0 23L12 14l12 9z" fill="#1f93e0"/><path d="M2 7.500h20L12 15z" fill="#f3f6f8"/></svg></div>
  <div class="w-[43px]"><svg class="-ml-[2px] w-6 h-6" viewBox="0 0 24 24" fill="none" stroke="#dc2547" stroke-width="1.500"><circle cx="12" cy="12" r="11"/><ellipse cx="12" cy="12" rx="5" ry="10.500"/><ellipse cx="12" cy="12" rx="7.500" ry="10.800"/></svg></div>
  <div class="w-[43px]"><svg class="-ml-[1px] w-[22px] h-[19px]" viewBox="0 0 22 19"><path d="M0 0h8l2 2.500h12V18H0z" fill="#f6c64c"/><path d="M0 0h8l1 3H0z" fill="#dd9f24"/><path d="M4 18.500V11q0-1 1-1h12q1 0 1 1v7.500h-4V14.500H8v4z" fill="#3e95dc"/></svg></div>
  <div class="w-[43px] relative"><svg class="-ml-[1px] w-[25px] h-[25px]" viewBox="0 0 25 25"><defs><linearGradient id="disc" x1="0" y1="0" x2="1" y2="1"><stop offset="0" stop-color="#f08a50"/><stop offset="1" stop-color="#8f76dd"/></linearGradient></defs><path d="M20 4.500A11 11 0 1 0 23.500 12.500V5" fill="none" stroke="url(#disc)" stroke-width="2"/><circle cx="12.500" cy="12.500" r="7.500" fill="#3a3542"/><circle cx="12.500" cy="12.500" r="4.300" fill="#fff"/><circle cx="12.500" cy="12.500" r="1.300" fill="#333"/></svg><span class="absolute bottom-0 left-[4px] w-[34px] h-[2px] bg-[#a5d6f3]"></span></div>
  <div class="w-[43px] relative"><svg class="ml-[1px] w-[26px] h-[26px]" viewBox="0 0 26 26"><circle cx="12" cy="12.500" r="11.500" fill="#3ba757"/><path d="M2 6.800A11.500 11.500 0 0 1 22 6.800H12L7 13z" fill="#e5432f"/><path d="M22 6.800A11.500 11.500 0 0 1 12 24l5-9V7z" fill="#f8c530"/><circle cx="12" cy="12.500" r="6" fill="#fff"/><circle cx="12" cy="12.500" r="4.600" fill="#3d7ee8"/><circle cx="19" cy="18.500" r="7" fill="#123e58"/><path d="M15 18q4-4 7 0-2 4-5 3z" fill="#d9ac70"/></svg><span class="absolute bottom-0 left-[4px] w-[34px] h-[2px] bg-[#a5d6f3]"></span></div>
  <div class="w-[41px] relative bg-[#565656]"><svg class="-ml-[2px] w-[19px] h-[25px]" viewBox="0 0 19 25"><rect x="11" y="0" width="8" height="25" rx="1" fill="#e0a01a"/><rect x="5.500" y="6" width="8.500" height="19" rx="1" fill="#f0bd2e"/><rect x="0" y="12.500" width="8.500" height="12.500" rx="1" fill="#fbdc68"/></svg><span class="absolute bottom-0 left-0 w-[41px] h-[2px] bg-[#a5d6f3]"></span></div>
  <div class="w-[30px]"><svg class="w-[12px] h-[8px]" viewBox="0 0 12 8" fill="none" stroke="#eee" stroke-width="1.400"><path d="M.7 7L6 1.500 11.300 7"/></svg></div>
  <div class="w-[20px]"><svg class="-ml-[3px] w-[17px] h-[17px]" viewBox="0 0 17 17" fill="none" stroke="#eee" stroke-width="1.300"><path d="M1 3.500L16 1v13L1 14.500zM11 5.500q-4-2-6 1.500M5 4v3h3M5 10.500q3 2 5.500-1"/><circle cx="13" cy="13" r="3.800" fill="#f29c1f" stroke="none"/></svg></div>
  <div class="w-[27px]"><svg class="-ml-[3px] w-[17px] h-[14px]" viewBox="0 0 17 14" fill="none" stroke="#eee" stroke-width="1.200"><path d="M1 4.500h2.500L7 1v12L3.500 9.500H1zM9 4.500q1.500 2.500 0 5"/><path d="M11.500 3q2.500 4 0 8M14 1.500q3 5.500 0 11" stroke="#aaa"/></svg></div>
  <div class="w-[25px]"><svg class="-ml-[3px] w-[14px] h-[14px]" viewBox="0 0 14 14" fill="none" stroke="#ddd" stroke-width="1.200"><path d="M1 13.500Q1 1.500 13 1.500M4 13.500Q4 5 13 5M7 13.500Q7 8.500 13 8.500"/><circle cx="11.500" cy="12" r="1.500" fill="#fff" stroke="none"/></svg></div>
  <div class="w-[31px] pr-[3px] text-[12px] tracking-[-0.5px]">ENG</div>
  <div class="w-[76px] pr-[3px] flex-col gap-[6px] text-[12px] tracking-[-0.5px]"><span>09:45</span><span>10-08-2025</span></div>
  <div class="w-[34px]"><svg class="-ml-[3px] w-[17px] h-[17px]" viewBox="0 0 17 17"><path d="M.5.500h16v12H9l-4 3.500v-3.500H.5z" fill="#fff"/><path d="M3 4h11M3 6.700h11M3 9.400h6" stroke="#282a2b" stroke-width="1.200"/><circle cx="13" cy="12" r="3" fill="#fff" stroke="#282a2b"/></svg></div>
  <div class="ml-auto mr-[5px] w-px bg-[#666]"></div>
</footer>
</body>
</html>
